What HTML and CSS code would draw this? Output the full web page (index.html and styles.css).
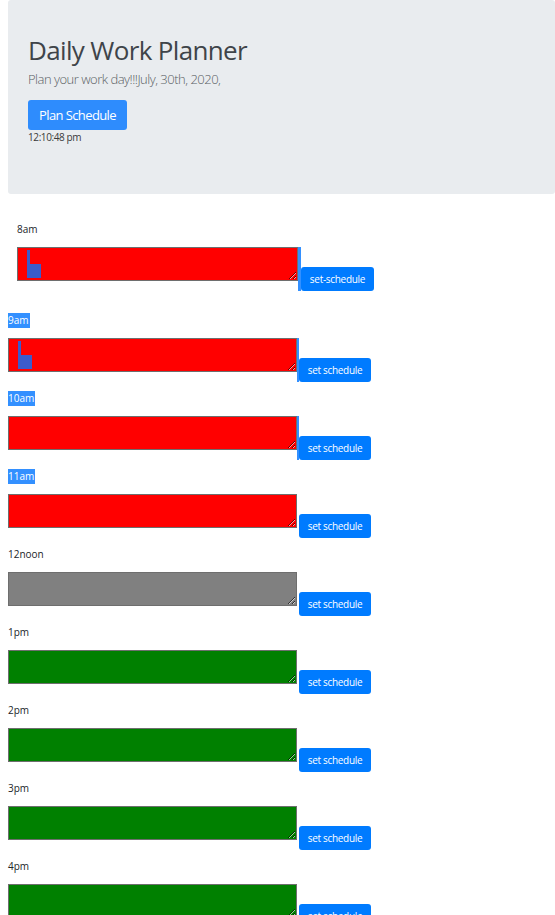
FILE: index.html
```html
<!DOCTYPE html>
<html lang="en">
<head>
<meta charset="utf-8">
<title>Daily Work Planner</title>
<link rel="stylesheet" href="styles.css">
</head>
<body>
<header class="jumbotron">
  <h1 class="title">Daily Work Planner</h1>
  <p class="lead">Plan your work day!!!July, 30th, 2020,</p>
  <button class="plan-btn">Plan Schedule</button>
  <div class="clock">12:10:48 pm</div>
</header>
<main class="planner">
  <section class="slot slot-first">
    <div class="hour">8am</div>
    <div class="slot-row">
      <div class="field">
        <textarea class="entry past"></textarea>
        <span class="caret-v"></span><span class="caret-b"></span>
      </div>
      <span class="gap sel"></span>
      <button class="save">set-schedule</button>
    </div>
  </section>
  <section class="slot">
    <div class="hour"><span class="hl">9am</span></div>
    <div class="slot-row">
      <div class="field">
        <textarea class="entry past"></textarea>
        <span class="caret-v"></span><span class="caret-b"></span>
      </div>
      <span class="gap sel"></span>
      <button class="save">set schedule</button>
    </div>
  </section>
  <section class="slot">
    <div class="hour"><span class="hl">10am</span></div>
    <div class="slot-row">
      <div class="field"><textarea class="entry past"></textarea></div>
      <span class="gap sel"></span>
      <button class="save">set schedule</button>
    </div>
  </section>
  <section class="slot">
    <div class="hour"><span class="hl">11am</span></div>
    <div class="slot-row">
      <div class="field"><textarea class="entry past"></textarea></div>
      <span class="gap"></span>
      <button class="save">set schedule</button>
    </div>
  </section>
  <section class="slot">
    <div class="hour">12noon</div>
    <div class="slot-row">
      <div class="field"><textarea class="entry present"></textarea></div>
      <span class="gap"></span>
      <button class="save">set schedule</button>
    </div>
  </section>
  <section class="slot">
    <div class="hour">1pm</div>
    <div class="slot-row">
      <div class="field"><textarea class="entry future"></textarea></div>
      <span class="gap"></span>
      <button class="save">set schedule</button>
    </div>
  </section>
  <section class="slot">
    <div class="hour">2pm</div>
    <div class="slot-row">
      <div class="field"><textarea class="entry future"></textarea></div>
      <span class="gap"></span>
      <button class="save">set schedule</button>
    </div>
  </section>
  <section class="slot">
    <div class="hour">3pm</div>
    <div class="slot-row">
      <div class="field"><textarea class="entry future"></textarea></div>
      <span class="gap"></span>
      <button class="save">set schedule</button>
    </div>
  </section>
  <section class="slot">
    <div class="hour">4pm</div>
    <div class="slot-row">
      <div class="field"><textarea class="entry future"></textarea></div>
      <span class="gap"></span>
      <button class="save">set schedule</button>
    </div>
  </section>
  <section class="slot">
    <div class="hour">5pm</div>
    <div class="slot-row">
      <div class="field"><textarea class="entry future"></textarea></div>
      <span class="gap"></span>
      <button class="save">set schedule</button>
    </div>
  </section>
</main>
</body>
</html>
```
FILE: styles.css
```css
html, body {
  margin: 0;
  padding: 0;
  overflow-x: hidden;
}
body {
  font-family: "Open Sans", "Noto Sans", sans-serif;
  color: #212529;
  background: #fff;
  font-size: 10px;
}
.jumbotron {
  margin-left: 8px;
  height: 194px;
  box-sizing: border-box;
  padding: 35px 20px 0 20px;
  background: #e9ecef;
  border-radius: 3px;
}
.title {
  margin: 0 0 4px;
  font-size: 26px;
  line-height: 31px;
  font-weight: 500;
  letter-spacing: -0.65px;
  color: #3f4449;
}
.lead {
  margin: 0 0 10px;
  font-size: 13px;
  line-height: 19.5px;
  font-weight: 300;
  letter-spacing: -0.5px;
  color: #5a5f64;
}
.plan-btn {
  display: block;
  width: 99px;
  height: 30px;
  margin: 0;
  padding: 0;
  border: none;
  border-radius: 3px;
  background: #2e8cfd;
  color: #fff;
  font-family: inherit;
  font-size: 13px;
  letter-spacing: -0.6px;
}
.clock {
  font-size: 10px;
  line-height: 15px;
  letter-spacing: -0.4px;
  color: #3a3a3a;
}
.planner {
  padding-top: 28px;
}
.slot {
  margin: 0 0 9px 8px;
}
.slot-first {
  margin-left: 17px;
  margin-bottom: 22px;
}
.hour {
  height: 15px;
  line-height: 15px;
  font-size: 10px;
  margin-bottom: 10px;
}
.hl {
  display: inline-block;
  background: #3390ff;
  color: #fff;
  padding-right: 1px;
}
.slot-row {
  display: flex;
  align-items: flex-start;
}
.field {
  position: relative;
}
.entry {
  display: block;
  width: 289px;
  height: 34px;
  box-sizing: border-box;
  margin: 0;
  padding: 2px;
  border: 1px solid #6e6e6e;
  font-family: inherit;
}
.slot-first .entry {
  width: 281px;
}
.past { background: #ff0000; }
.present { background: #808080; }
.future { background: #008000; }
.caret-v {
  position: absolute;
  left: 10px;
  top: 3px;
  width: 3px;
  height: 28px;
  background: #3b5bcb;
}
.caret-b {
  position: absolute;
  left: 10px;
  top: 17px;
  width: 14px;
  height: 14px;
  background: #3b5bcb;
}
.gap {
  width: 2px;
  height: 44px;
  flex: none;
}
.slot-first .gap {
  width: 3px;
}
.sel {
  background: #3390ff;
}
.save {
  margin: 20px 0 0;
  width: 72px;
  height: 24px;
  padding: 0;
  border: none;
  border-radius: 3px;
  background: #007bff;
  color: #fff;
  font-family: inherit;
  font-size: 10px;
  letter-spacing: -0.3px;
  flex: none;
}
.slot-first .save {
  width: 73px;
}
```
